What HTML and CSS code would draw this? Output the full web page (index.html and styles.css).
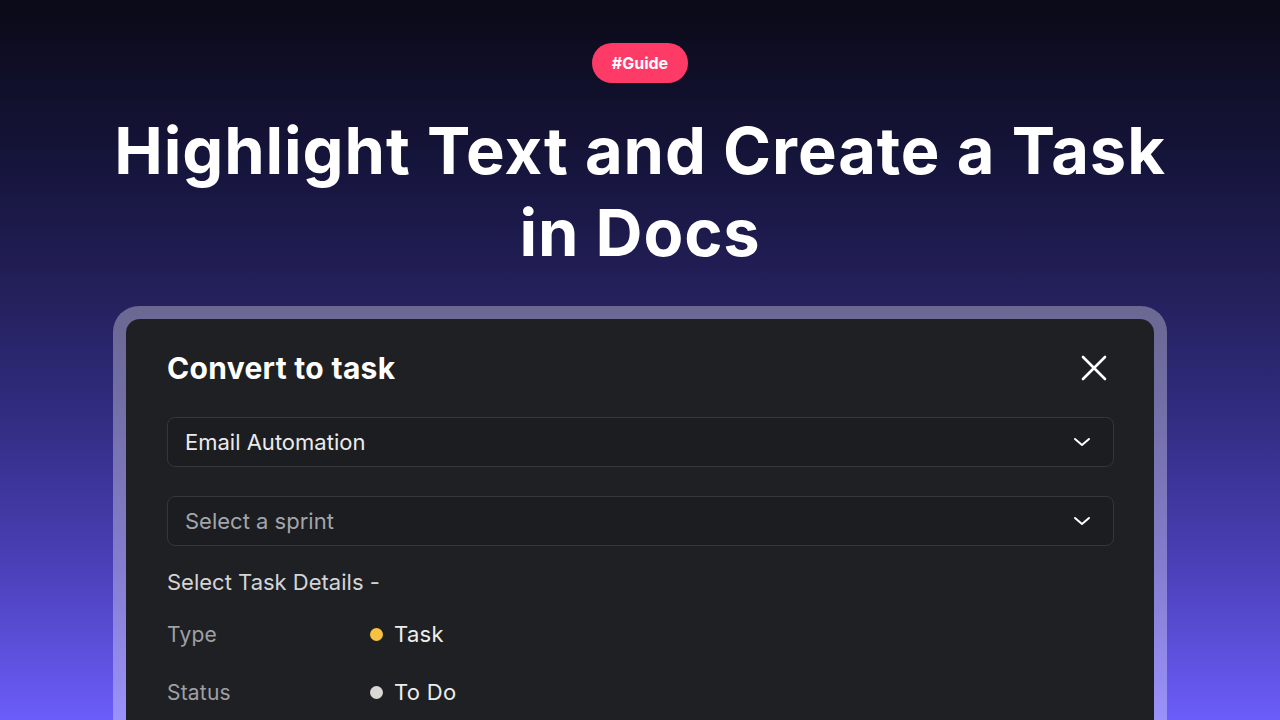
FILE: index.html
```html
<!DOCTYPE html>
<html lang="en">
<head>
    <meta charset="UTF-8">
    <meta name="viewport" content="width=device-width, initial-scale=1.0">
    <title>Highlight Text and Create a Task in Docs</title>
    <link rel="stylesheet" href="styles.css">
</head>
<body>

    <!-- Hero -->
    <header class="hero">
        <span class="badge">#Guide</span>
        <h1 class="title">Highlight Text and Create a Task<br>in Docs</h1>
    </header>

    <!-- Convert to task dialog -->
    <div class="frame">
        <div class="panel">
            <div class="panel-head">
                <h2>Convert to task</h2>
                <button class="close-btn" aria-label="Close">
                    <svg width="26" height="26" viewBox="0 0 26 26" fill="none" stroke="#fff" stroke-width="2.6" stroke-linecap="round">
                        <path d="M2 2 L24 24 M24 2 L2 24"/>
                    </svg>
                </button>
            </div>

            <div class="select">
                <span class="select-value">Email Automation</span>
                <svg class="chevron" width="18" height="10" viewBox="0 0 18 10" fill="none" stroke="#fff" stroke-width="2" stroke-linecap="round" stroke-linejoin="round">
                    <path d="M2 2 L9 8 L16 2"/>
                </svg>
            </div>

            <div class="select">
                <span class="select-value placeholder">Select a sprint</span>
                <svg class="chevron" width="18" height="10" viewBox="0 0 18 10" fill="none" stroke="#fff" stroke-width="2" stroke-linecap="round" stroke-linejoin="round">
                    <path d="M2 2 L9 8 L16 2"/>
                </svg>
            </div>

            <p class="details-label">Select Task Details -</p>

            <div class="detail-row">
                <span class="detail-name">Type</span>
                <span class="detail-value"><span class="dot dot-task"></span>Task</span>
            </div>
            <div class="detail-row">
                <span class="detail-name">Status</span>
                <span class="detail-value"><span class="dot dot-todo"></span>To Do</span>
            </div>
        </div>
    </div>

</body>
</html>
```

FILE: styles.css
```css
/* Global Styles */
body {
    font-family: Inter, "Noto Sans", sans-serif;
    margin: 0;
    padding: 0;
    height: 720px;
    overflow: hidden;
    text-align: center;
    background: linear-gradient(180deg, #0b0a17 0%, #15143a 22%, #221e56 38%, #2f2a7a 55%, #4a3fb6 78%, #6b5df9 100%);
    color: #fff;
}

/* Hero */
.hero {
    padding-top: 43px;
}

.badge {
    display: inline-block;
    width: 96px;
    height: 40px;
    line-height: 40px;
    border-radius: 20px;
    background: #fe3b67;
    color: #fff;
    font-size: 16px;
    font-weight: 700;
}

.title {
    margin: 27px 0 0;
    font-size: 65px;
    line-height: 82px;
    font-weight: 700;
    letter-spacing: 0.9px;
    color: #fff;
}

/* Dialog */
.frame {
    width: 1054px;
    height: 414px;
    margin: 32px auto 0;
    padding: 13px 13px 0;
    box-sizing: border-box;
    background: rgba(255, 255, 255, 0.32);
    border-radius: 26px 26px 0 0;
}

.panel {
    background: #1f2023;
    border-radius: 14px 14px 0 0;
    padding: 31px 40px 0 41px;
    height: 100%;
    box-sizing: border-box;
    text-align: left;
}

.panel-head {
    display: flex;
    justify-content: space-between;
    align-items: center;
    height: 36px;
}

.panel-head h2 {
    margin: 0;
    font-size: 30px;
    line-height: 36px;
    font-weight: 700;
    letter-spacing: 0.3px;
    color: #fff;
}

.close-btn {
    background: none;
    border: none;
    padding: 0;
    margin-right: 7px;
    width: 26px;
    height: 26px;
    cursor: pointer;
}

.select {
    display: flex;
    justify-content: space-between;
    align-items: center;
    height: 50px;
    box-sizing: border-box;
    margin-top: 31px;
    padding: 0 22px 0 17px;
    border: 1px solid #34363b;
    border-radius: 8px;
    background: #1c1d20;
}

.select + .select {
    margin-top: 29px;
}

.select-value {
    font-size: 22px;
    color: #ebebeb;
}

.select-value.placeholder {
    color: #a3a5aa;
}

.details-label {
    margin: 22px 0 0;
    font-size: 22px;
    line-height: 28px;
    color: #d4d4d6;
}

.detail-row {
    display: flex;
    align-items: center;
    height: 28px;
    margin-top: 24px;
}

.detail-row + .detail-row {
    margin-top: 30px;
}

.detail-name {
    width: 203px;
    font-size: 21px;
    letter-spacing: 0.2px;
    color: #9ea0a5;
}

.detail-value {
    display: flex;
    align-items: center;
    font-size: 22px;
    letter-spacing: 0.3px;
    color: #ededed;
}

.dot {
    width: 13px;
    height: 13px;
    border-radius: 50%;
    margin-right: 11px;
}

.dot-task {
    background: #f7c244;
}

.dot-todo {
    background: #dad8d4;
}
```
